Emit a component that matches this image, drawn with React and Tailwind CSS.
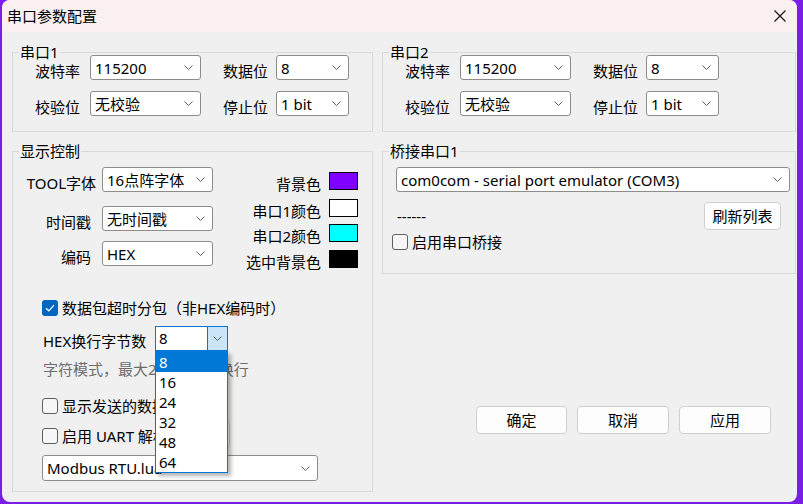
import React from "react";

// Small down chevron used by every combo box
function Chevron() {
  return (
    <svg width="9" height="5" viewBox="0 0 9 5" className="shrink-0">
      <path d="M0.5 0.5 L4.5 4.5 L8.5 0.5" fill="none" stroke="#606060" strokeWidth="1" />
    </svg>
  );
}

function Combo({ value, className = "" }) {
  return (
    <div
      className={`flex items-center justify-between rounded-[3px] border border-[#8c8c8c] bg-white pl-[4px] pr-[7px] ${className}`}
    >
      <span className="whitespace-nowrap leading-[20px]">{value}</span>
      <Chevron />
    </div>
  );
}

function Group({ title, className = "", children }) {
  return (
    <div className={`relative border border-[#d9d9d9] ${className}`}>
      <span className="absolute left-[6px] top-[-11px] bg-[#f0f0f0] px-[1px] leading-[20px]">
        {title}
      </span>
      {children}
    </div>
  );
}

function CheckBox({ checked, className = "" }) {
  if (checked) {
    return (
      <span
        className={`flex h-[16px] w-[16px] shrink-0 items-center justify-center rounded-[3px] bg-[#0067c0] ${className}`}
      >
        <svg width="10" height="8" viewBox="0 0 10 8">
          <path d="M1 4.2 L3.8 6.8 L9 1.2" fill="none" stroke="white" strokeWidth="1.2" />
        </svg>
      </span>
    );
  }
  return (
    <span
      className={`h-[16px] w-[16px] shrink-0 rounded-[3px] border border-[#5f5f5f] bg-[#f6f6f6] ${className}`}
    />
  );
}

function Swatch({ label, color, className = "" }) {
  return (
    <div className={`flex h-[18px] items-center ${className}`}>
      <span className="mr-[8px] whitespace-nowrap pt-[6px] leading-[20px]">{label}</span>
      <span className={`h-[18px] w-[29px] border border-black ${color}`} />
    </div>
  );
}

function PortGroup({ title }) {
  return (
    <Group title={title} className="h-[80px] pl-[22px] pt-[2px]">
      <div className="flex h-[25px] items-center">
        <span className="w-[45px] whitespace-nowrap pt-[6px] leading-[20px]">波特率</span>
        <Combo value="115200" className="ml-[10px] h-[25px] w-[111px]" />
        <span className="ml-[22px] w-[45px] whitespace-nowrap pt-[6px] leading-[20px]">数据位</span>
        <Combo value="8" className="ml-[8px] h-[25px] w-[73px]" />
      </div>
      <div className="mt-[11px] flex h-[25px] items-center">
        <span className="w-[45px] whitespace-nowrap pt-[6px] leading-[20px]">校验位</span>
        <Combo value="无校验" className="ml-[10px] h-[25px] w-[111px]" />
        <span className="ml-[22px] w-[45px] whitespace-nowrap pt-[6px] leading-[20px]">停止位</span>
        <Combo value="1 bit" className="ml-[8px] h-[25px] w-[73px]" />
      </div>
    </Group>
  );
}

function WinButton({ children, className = "" }) {
  return (
    <button
      className={`flex h-[28px] items-center justify-center rounded-[4px] border border-[#cfcfcf] bg-[#fdfdfd] leading-[20px] ${className}`}
    >
      {children}
    </button>
  );
}

export default function App() {
  const hexOptions = ["8", "16", "24", "32", "48", "64"];

  return (
    <div className="h-[504px] w-[803px] bg-[#7a1ee6] pl-[2px] font-['Noto_Sans','Noto_Sans_CJK_SC',sans-serif] text-[15px] text-black">
      <div className="flex h-[502px] w-[795px] flex-col overflow-hidden rounded-[8px] bg-[#f0f0f0]">
        {/* Title bar */}
        <div className="flex h-[32px] shrink-0 items-center justify-between bg-[#f9f0ef] pl-[5px] pr-[11px]">
          <span className="leading-[20px]">串口参数配置</span>
          <svg width="12" height="12" viewBox="0 0 12 12">
            <path d="M0.5 0.5 L11.5 11.5 M11.5 0.5 L0.5 11.5" stroke="#111" strokeWidth="1.1" />
          </svg>
        </div>

        {/* Body */}
        <div className="flex flex-col pl-[10px] pt-[20px]">
          <div className="flex gap-[9px]">
            <div className="w-[361px]">
              <PortGroup title="串口1" />
            </div>
            <div className="w-[414px]">
              <PortGroup title="串口2" />
            </div>
          </div>

          <div className="mt-[19px] flex items-start gap-[9px]">
            {/* 显示控制 */}
            <Group title="显示控制" className="h-[341px] w-[361px]">
              <div className="flex items-start">
                <div className="flex flex-col pt-[15px]">
                  <div className="flex h-[25px] items-center">
                    <span className="w-[89px] whitespace-nowrap pr-[6px] pt-[6px] text-right leading-[20px]">
                      TOOL字体
                    </span>
                    <Combo value="16点阵字体" className="h-[25px] w-[111px]" />
                  </div>
                  <div className="mt-[14px] flex h-[25px] items-center">
                    <span className="w-[89px] whitespace-nowrap pr-[11px] pt-[6px] text-right leading-[20px]">
                      时间戳
                    </span>
                    <Combo value="无时间戳" className="h-[25px] w-[111px]" />
                  </div>
                  <div className="mt-[10px] flex h-[25px] items-center">
                    <span className="w-[89px] whitespace-nowrap pr-[11px] pt-[6px] text-right leading-[20px]">
                      编码
                    </span>
                    <Combo value="HEX" className="h-[25px] w-[111px]" />
                  </div>
                </div>
                <div className="ml-auto mr-[14px] flex flex-col items-end pt-[20px]">
                  <Swatch label="背景色" color="bg-[#8000ff]" />
                  <Swatch label="串口1颜色" color="bg-white" className="mt-[9px]" />
                  <Swatch label="串口2颜色" color="bg-[#00ffff]" className="mt-[7px]" />
                  <Swatch label="选中背景色" color="bg-black" className="mt-[8px]" />
                </div>
              </div>

              <div className="flex flex-col pl-[29px]">
                <div className="mt-[32px] flex h-[16px] items-center">
                  <CheckBox checked />
                  <span className="ml-[4px] whitespace-nowrap leading-[20px]">数据包超时分包（非HEX编码时）</span>
                </div>

                <div className="mt-[10px] flex h-[25px] items-center">
                  <span className="ml-[1px] w-[112px] whitespace-nowrap pt-[5px] leading-[20px]">HEX换行字节数</span>
                  <div className="relative flex h-[25px] w-[73px] border border-[#0078d7] bg-white">
                    <span className="flex-1 pl-[3px] leading-[23px]">8</span>
                    <span className="flex w-[20px] items-center justify-center border-l border-[#0078d7] bg-[#cce4f7]">
                      <Chevron />
                    </span>
                    <div className="absolute left-[-1px] top-[24px] z-10 w-[73px] border border-[#0078d7] bg-white shadow-[3px_3px_4px_rgba(0,0,0,0.3)]">
                      {hexOptions.map((opt, i) => (
                        <div
                          key={opt}
                          className={
                            i === 0
                              ? "h-[20px] bg-[#0078d7] pl-[3px] leading-[20px] text-white"
                              : "h-[20px] pl-[3px] leading-[20px]"
                          }
                        >
                          {opt}
                        </div>
                      ))}
                    </div>
                  </div>
                </div>

                <span className="ml-[1px] mt-[8px] whitespace-nowrap leading-[20px] text-[#6d6d6d]">
                  字符模式，最大256字节后换行
                </span>

                <div className="mt-[19px] flex h-[16px] items-center">
                  <CheckBox />
                  <span className="ml-[4px] whitespace-nowrap leading-[20px]">显示发送的数据</span>
                </div>

                <div className="mt-[6px] flex h-[24px] items-start">
                  <CheckBox className="mt-[8px]" />
                  <span className="ml-[4px] mt-[6px] whitespace-nowrap leading-[20px]">启用 UART 解析</span>
                  <WinButton className="ml-[4px] h-[24px] w-[58px]">设置</WinButton>
                </div>

                <Combo value="Modbus RTU.lua" className="mt-[11px] h-[26px] w-[276px]" />
              </div>
            </Group>

            {/* Right column */}
            <div className="flex w-[414px] flex-col">
              <Group title="桥接串口1" className="h-[123px]">
                <Combo
                  value="com0com - serial port emulator (COM3)"
                  className="ml-[13px] mt-[15px] h-[25px] w-[394px]"
                />
                <div className="mt-[10px] flex h-[28px] items-center justify-between pl-[14px] pr-[14px]">
                  <span className="leading-[20px]">------</span>
                  <WinButton className="w-[77px]">刷新列表</WinButton>
                </div>
                <div className="mt-[4px] flex h-[16px] items-center pl-[9px]">
                  <CheckBox />
                  <span className="ml-[4px] whitespace-nowrap leading-[20px]">启用串口桥接</span>
                </div>
              </Group>

              <div className="ml-[94px] mt-[132px] flex gap-[10px]">
                <WinButton className="w-[91px]">确定</WinButton>
                <WinButton className="w-[92px]">取消</WinButton>
                <WinButton className="w-[92px]">应用</WinButton>
              </div>
            </div>
          </div>
        </div>
      </div>
    </div>
  );
}
